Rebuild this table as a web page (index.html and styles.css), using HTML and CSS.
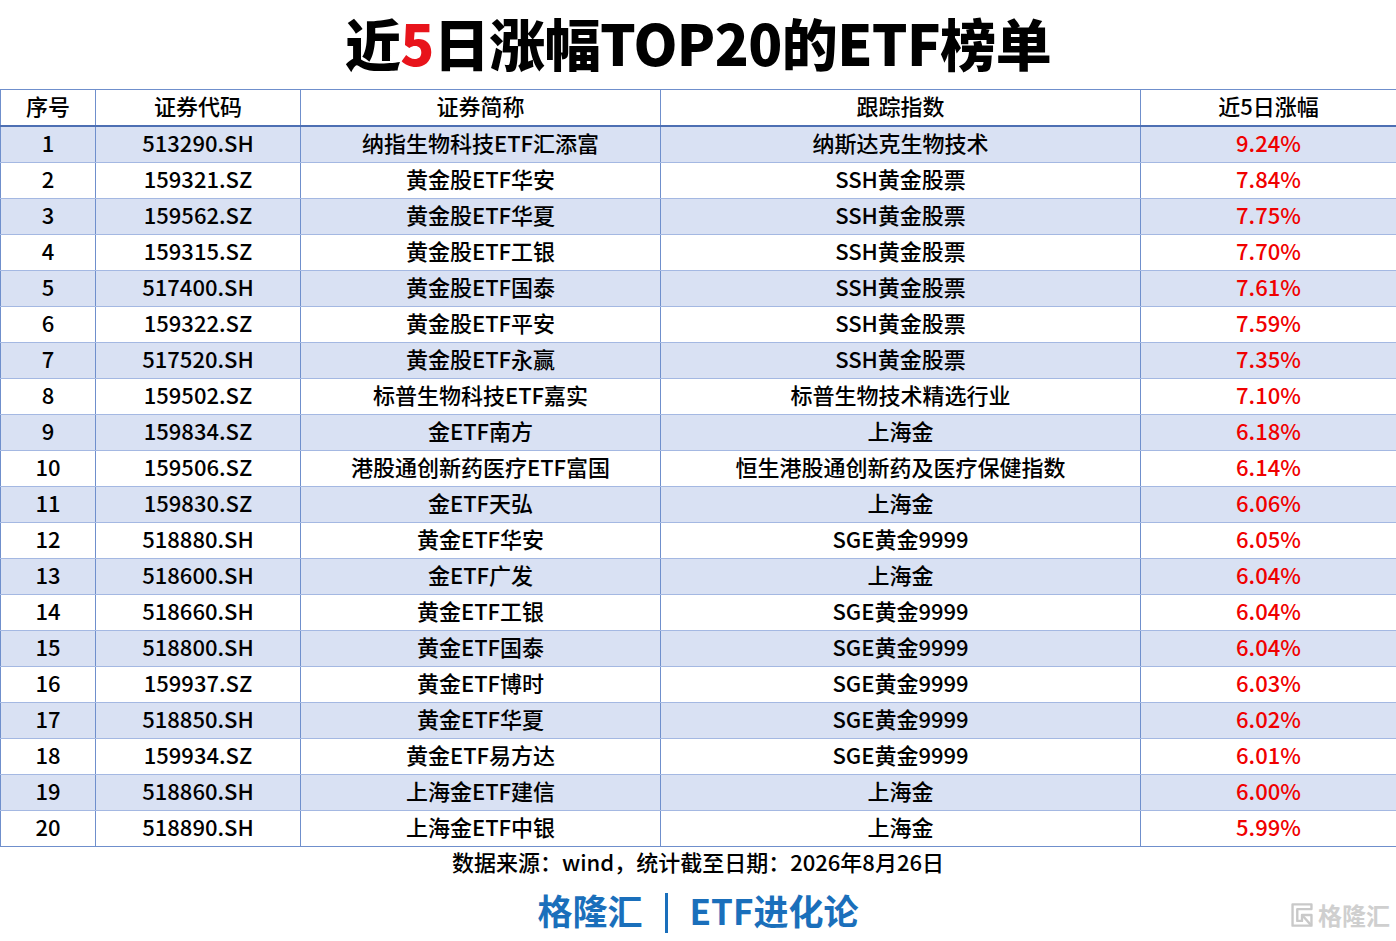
FILE: index.html
```html
<!DOCTYPE html>
<html lang="zh-CN">
<head>
<meta charset="utf-8">
<title>近5日涨幅TOP20的ETF榜单</title>
<link rel="stylesheet" href="styles.css">
</head>
<body>
<div class="page">
  <h1 class="title">近<span class="red">5</span>日涨幅TOP20的ETF榜单</h1>
  <table class="rank">
    <colgroup>
      <col class="c1"><col class="c2"><col class="c3"><col class="c4"><col class="c5">
    </colgroup>
    <thead>
      <tr><th>序号</th><th>证券代码</th><th>证券简称</th><th>跟踪指数</th><th>近5日涨幅</th></tr>
    </thead>
    <tbody>
      <tr><td>1</td><td>513290.SH</td><td>纳指生物科技ETF汇添富</td><td>纳斯达克生物技术</td><td class="pct">9.24%</td></tr>
      <tr><td>2</td><td>159321.SZ</td><td>黄金股ETF华安</td><td>SSH黄金股票</td><td class="pct">7.84%</td></tr>
      <tr><td>3</td><td>159562.SZ</td><td>黄金股ETF华夏</td><td>SSH黄金股票</td><td class="pct">7.75%</td></tr>
      <tr><td>4</td><td>159315.SZ</td><td>黄金股ETF工银</td><td>SSH黄金股票</td><td class="pct">7.70%</td></tr>
      <tr><td>5</td><td>517400.SH</td><td>黄金股ETF国泰</td><td>SSH黄金股票</td><td class="pct">7.61%</td></tr>
      <tr><td>6</td><td>159322.SZ</td><td>黄金股ETF平安</td><td>SSH黄金股票</td><td class="pct">7.59%</td></tr>
      <tr><td>7</td><td>517520.SH</td><td>黄金股ETF永赢</td><td>SSH黄金股票</td><td class="pct">7.35%</td></tr>
      <tr><td>8</td><td>159502.SZ</td><td>标普生物科技ETF嘉实</td><td>标普生物技术精选行业</td><td class="pct">7.10%</td></tr>
      <tr><td>9</td><td>159834.SZ</td><td>金ETF南方</td><td>上海金</td><td class="pct">6.18%</td></tr>
      <tr><td>10</td><td>159506.SZ</td><td>港股通创新药医疗ETF富国</td><td>恒生港股通创新药及医疗保健指数</td><td class="pct">6.14%</td></tr>
      <tr><td>11</td><td>159830.SZ</td><td>金ETF天弘</td><td>上海金</td><td class="pct">6.06%</td></tr>
      <tr><td>12</td><td>518880.SH</td><td>黄金ETF华安</td><td>SGE黄金9999</td><td class="pct">6.05%</td></tr>
      <tr><td>13</td><td>518600.SH</td><td>金ETF广发</td><td>上海金</td><td class="pct">6.04%</td></tr>
      <tr><td>14</td><td>518660.SH</td><td>黄金ETF工银</td><td>SGE黄金9999</td><td class="pct">6.04%</td></tr>
      <tr><td>15</td><td>518800.SH</td><td>黄金ETF国泰</td><td>SGE黄金9999</td><td class="pct">6.04%</td></tr>
      <tr><td>16</td><td>159937.SZ</td><td>黄金ETF博时</td><td>SGE黄金9999</td><td class="pct">6.03%</td></tr>
      <tr><td>17</td><td>518850.SH</td><td>黄金ETF华夏</td><td>SGE黄金9999</td><td class="pct">6.02%</td></tr>
      <tr><td>18</td><td>159934.SZ</td><td>黄金ETF易方达</td><td>SGE黄金9999</td><td class="pct">6.01%</td></tr>
      <tr><td>19</td><td>518860.SH</td><td>上海金ETF建信</td><td>上海金</td><td class="pct">6.00%</td></tr>
      <tr><td>20</td><td>518890.SH</td><td>上海金ETF中银</td><td>上海金</td><td class="pct">5.99%</td></tr>
    </tbody>
  </table>
  <p class="source">数据来源：wind，统计截至日期：2026年8月26日</p>
  <div class="brand"><span>格隆汇</span><span class="bar"></span><span>ETF进化论</span></div>
  <div class="watermark">
    <svg class="wm-icon" width="26" height="26" viewBox="0 0 22 22" aria-hidden="true">
      <path d="M3 2h16v4H7v10h4v-5h8v9H3z" fill="none" stroke="#c9c9c9" stroke-width="2" stroke-linejoin="round"/>
      <path d="M11 11l8 9" stroke="#c9c9c9" stroke-width="2"/>
    </svg>
    <span>格隆汇</span>
  </div>
</div>
</body>
</html>
```
FILE: styles.css
```css
html, body {
  margin: 0;
  padding: 0;
  background: #ffffff;
}
.page {
  position: relative;
  width: 1396px;
  height: 941px;
  font-family: "Noto Sans CJK SC", "Noto Sans", sans-serif;
  color: #000;
}
.title {
  margin: 0;
  height: 89px;
  line-height: 84px;
  text-align: center;
  font-size: 56px;
  font-weight: 900;
  letter-spacing: -0.6px;
}
.red { color: #e8141b; }
.rank {
  width: 1396px;
  border-collapse: collapse;
  table-layout: fixed;
  font-size: 22px;
  font-weight: 500;
}
.c1 { width: 95px; }
.c2 { width: 205px; }
.c3 { width: 360px; }
.c4 { width: 480px; }
.c5 { width: 256px; }
.rank th, .rank td {
  height: 31px;
  padding: 0 0 4px;
  text-align: center;
  vertical-align: middle;
  border-left: 1px solid #6f8fcc;
  border-right: 1px solid #6f8fcc;
  border-bottom: 1px solid #a4b8e2;
  line-height: 31px;
  white-space: nowrap;
}
.rank th {
  font-weight: 500;
  border-top: 1px solid #6f8fcc;
  border-bottom: 2px solid #4d6fb3;
  height: 30px;
}
.rank tbody tr:nth-child(odd) td { background: #d9e1f3; }
.rank tbody tr:last-child td { border-bottom: 1px solid #6f8fcc; }
.rank .pct { color: #f00000; }
.source {
  margin: 0;
  height: 34px;
  line-height: 29px;
  text-align: center;
  font-size: 22px;
  font-weight: 500;
}
.brand {
  display: flex;
  justify-content: center;
  align-items: center;
  gap: 22px;
  height: 56px;
  color: #1a6fbb;
  font-size: 35px;
  font-weight: 700;
}
.brand .bar {
  width: 3px;
  height: 40px;
  background: #1a6fbb;
  margin-top: 8px;
}
.watermark {
  position: absolute;
  right: 6px;
  bottom: 9px;
  display: flex;
  align-items: center;
  gap: 3px;
  color: #cfcfcf;
  font-size: 24px;
  font-weight: 700;
}
```
